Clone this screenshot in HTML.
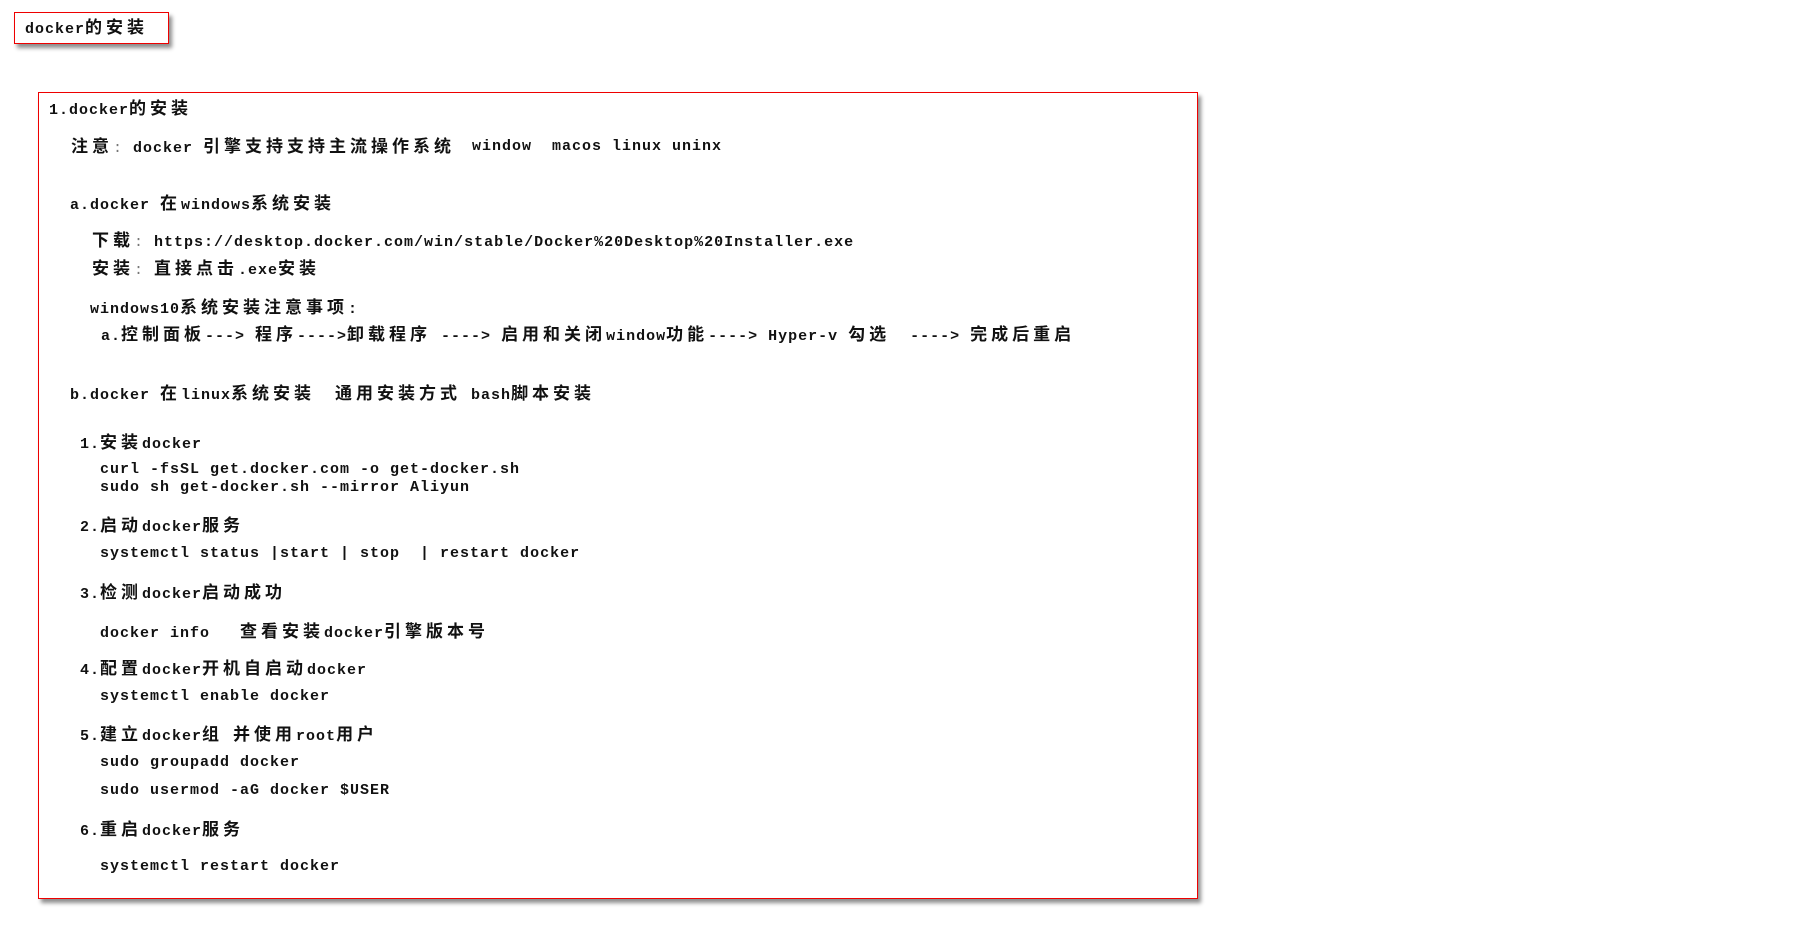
<!DOCTYPE html>
<html><head><meta charset="utf-8"><style>
html,body{margin:0;padding:0;background:#fff;width:1804px;height:945px;overflow:hidden;position:relative}
.t{position:absolute;white-space:pre;font-family:"Liberation Mono","Noto Sans CJK SC",monospace;font-size:15px;letter-spacing:1px;font-weight:bold;color:#111;line-height:20px}
.c{font-family:"Noto Sans CJK SC","WenQuanYi Zen Hei",sans-serif;font-size:17px;letter-spacing:4px;font-weight:bold}
.g{color:#777;font-weight:normal}
.box{position:absolute;border:1.5px solid #e00;background:#fff;box-shadow:3px 4px 4px rgba(0,0,0,.45)}
</style></head><body>
<div class="box" style="left:14px;top:12px;width:153px;height:30px"></div>
<div class="t" style="left:25px;top:16px">docker<span class="c">的安装</span></div>
<div class="box" style="left:38px;top:92px;width:1158px;height:805px"></div>
<div class="t" style="left:49px;top:97px">1.docker<span class="c">的安装</span></div>
<div class="t" style="left:71px;top:135px"><span class="c">注意</span><span class="g">:</span> docker <span class="c">引擎支持支持主流操作系统</span></div>
<div class="t" style="left:472px;top:137px">window  macos linux uninx</div>
<div class="t" style="left:70px;top:192px">a.docker <span class="c">在</span>windows<span class="c">系统安装</span></div>
<div class="t" style="left:92px;top:229px"><span class="c">下载</span><span class="g">:</span> https://desktop.docker.com/win/stable/Docker%20Desktop%20Installer.exe</div>
<div class="t" style="left:92px;top:257px"><span class="c">安装</span><span class="g">:</span> <span class="c">直接点击</span>.exe<span class="c">安装</span></div>
<div class="t" style="left:90px;top:296px">windows10<span class="c">系统安装注意事项</span>:</div>
<div class="t" style="left:101px;top:323px">a.<span class="c">控制面板</span>---&gt; <span class="c">程序</span>----&gt;<span class="c">卸载程序</span> ----&gt; <span class="c">启用和关闭</span>window<span class="c">功能</span>----&gt; Hyper-v <span class="c">勾选</span>  ----&gt; <span class="c">完成后重启</span></div>
<div class="t" style="left:70px;top:382px">b.docker <span class="c">在</span>linux<span class="c">系统安装</span>  <span class="c">通用安装方式</span> bash<span class="c">脚本安装</span></div>
<div class="t" style="left:80px;top:431px">1.<span class="c">安装</span>docker</div>
<div class="t" style="left:100px;top:460px">curl -fsSL get.docker.com -o get-docker.sh</div>
<div class="t" style="left:100px;top:478px">sudo sh get-docker.sh --mirror Aliyun</div>
<div class="t" style="left:80px;top:514px">2.<span class="c">启动</span>docker<span class="c">服务</span></div>
<div class="t" style="left:100px;top:544px">systemctl status |start | stop  | restart docker</div>
<div class="t" style="left:80px;top:581px">3.<span class="c">检测</span>docker<span class="c">启动成功</span></div>
<div class="t" style="left:100px;top:620px">docker info   <span class="c">查看安装</span>docker<span class="c">引擎版本号</span></div>
<div class="t" style="left:80px;top:657px">4.<span class="c">配置</span>docker<span class="c">开机自启动</span>docker</div>
<div class="t" style="left:100px;top:687px">systemctl enable docker</div>
<div class="t" style="left:80px;top:723px">5.<span class="c">建立</span>docker<span class="c">组</span> <span class="c">并使用</span>root<span class="c">用户</span></div>
<div class="t" style="left:100px;top:753px">sudo groupadd docker</div>
<div class="t" style="left:100px;top:781px">sudo usermod -aG docker $USER</div>
<div class="t" style="left:80px;top:818px">6.<span class="c">重启</span>docker<span class="c">服务</span></div>
<div class="t" style="left:100px;top:857px">systemctl restart docker</div>
</body></html>
